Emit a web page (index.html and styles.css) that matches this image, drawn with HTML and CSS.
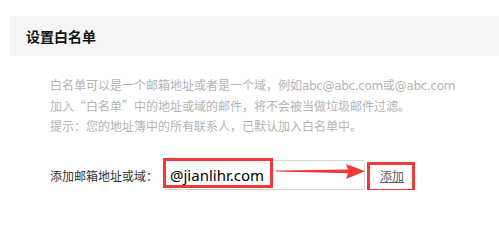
FILE: index.html
```html
<!DOCTYPE html>
<html lang="zh-CN">
<head>
<meta charset="utf-8">
<title>设置白名单</title>
<link rel="stylesheet" href="styles.css">
</head>
<body>
<div class="panel">
  <div class="panel-head">设置白名单</div>
  <div class="panel-body">
    <p class="tips">白名单可以是一个邮箱地址或者是一个域，例如<span class="latin">abc@abc.com</span>或<span class="latin">@abc.com</span><br>加入“白名单”中的地址或域的邮件，将不会被当做垃圾邮件过滤。<br>提示：您的地址簿中的所有联系人，已默认加入白名单中。</p>
    <div class="add-row">
      <label class="add-label" for="addr">添加邮箱地址或域：</label>
      <input class="add-input" id="addr" type="text" value="@jianlihr.com">
      <a class="add-link" href="#">添加</a>
      <span class="mark mark-input"></span>
      <svg class="mark-arrow" width="90" height="16" viewBox="0 0 90 16">
        <polygon points="0,6.6 0,7.6 72,9.3 70,15 89,7.2 70,0 72,5.4" fill="#f03a3a"/>
      </svg>
      <span class="mark mark-link"></span>
    </div>
  </div>
</div>
</body>
</html>
```

FILE: styles.css
```css
html, body {
  margin: 0;
  padding: 0;
  background: #ffffff;
}

body {
  font-family: "Noto Sans CJK SC", sans-serif;
  color: #333333;
}

.panel {
  margin: 16px 0 0 10px;
}

.panel-head {
  height: 40px;
  line-height: 40px;
  padding-left: 16px;
  background: #f5f5f5;
  font-size: 14px;
  font-weight: bold;
  color: #111111;
}

.panel-body {
  padding: 19px 0 0 40px;
}

.tips {
  margin: 0;
  font-size: 12px;
  line-height: 20px;
  color: #b4b4b4;
  white-space: nowrap;
}

.latin {
  font-family: "DejaVu Sans", sans-serif;
  letter-spacing: -0.35px;
}

.add-row {
  position: relative;
  display: flex;
  align-items: center;
  height: 30px;
  margin-top: 24px;
}

.add-label {
  font-size: 12px;
  color: #333333;
}

.add-input {
  box-sizing: border-box;
  width: 201px;
  height: 30px;
  margin: 0 0 0 6px;
  padding: 0 0 0 5px;
  border: 1px solid #d6d6d6;
  border-radius: 2px;
  font-family: "Noto Sans", sans-serif;
  font-size: 15px;
  color: #000000;
  background: #ffffff;
  outline: none;
}

.add-link {
  margin-left: 15px;
  font-size: 12px;
  color: #525d6d;
  text-decoration: underline;
}

.mark {
  position: absolute;
  box-sizing: border-box;
  border: 3px solid #f03a3a;
}

.mark-input {
  left: 113px;
  top: -2px;
  width: 110px;
  height: 30px;
}

.mark-link {
  left: 317px;
  top: 2px;
  width: 48px;
  height: 30px;
}

.mark-arrow {
  position: absolute;
  left: 226px;
  top: 4px;
}
```
